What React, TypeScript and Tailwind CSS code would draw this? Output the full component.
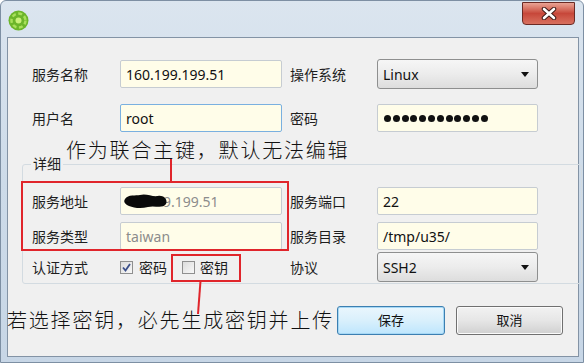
import React from 'react';

const FONT = "font-['Noto_Sans','Noto_Sans_CJK_SC',sans-serif]";

const Label = ({ text, w }: { text: string; w: string }) => (
  <span className={`${w} shrink-0 text-[14px] text-[#1e1e1e]`}>{text}</span>
);

const Field = ({ value, muted, focused, children }: { value?: string; muted?: boolean; focused?: boolean; children?: React.ReactNode }) => (
  <div
    className={`flex items-center h-[28px] px-[5px] rounded-[2px] border bg-[#fffde9] text-[14px] ${
      focused ? 'border-[#7ab0e0]' : 'border-[#c6ccd2]'
    } ${muted ? 'text-[#8c8c8c]' : 'text-[#111]'}`}
  >
    {children ?? value}
  </div>
);

const Select = ({ value }: { value: string }) => (
  <div className="flex items-center justify-between h-[30px] w-[161px] pl-[5px] pr-[8px] rounded-[3px] border border-[#8e8f8f] bg-gradient-to-b from-[#f6f6f6] via-[#ececec] to-[#dddddd] text-[14px] text-[#111]">
    <span>{value}</span>
    <svg width="8" height="5" viewBox="0 0 8 5">
      <path d="M0 0 H8 L4 5 Z" fill="#111" />
    </svg>
  </div>
);

const Check = ({ checked }: { checked?: boolean }) => (
  <span className="w-[13px] h-[13px] shrink-0 border border-[#8f8f8f] bg-gradient-to-br from-[#dcdcdc] to-[#f8f8f8] flex items-center justify-center">
    {checked && (
      <svg width="9" height="9" viewBox="0 0 9 9">
        <path d="M1 4.5 L3.5 7.5 L8 1" stroke="#3b4f8a" strokeWidth="1.8" fill="none" />
      </svg>
    )}
  </span>
);

function Row({ children, className = '' }: { children: React.ReactNode; className?: string }) {
  return <div className={`flex items-center h-[30px] ${className}`}>{children}</div>;
}

export default function App() {
  return (
    <div className={`relative w-[584px] h-[363px] overflow-hidden ${FONT} bg-gradient-to-b from-[#dbe5ef] via-[#cddbe9] to-[#c7d6e6] border border-[#7d8fa3] rounded-t-[6px]`}>
      {/* title bar */}
      <div className="flex items-start justify-between h-[36px]">
        <svg className="ml-[7px] mt-[9px]" width="21" height="21" viewBox="0 0 21 21">
          <circle cx="10.5" cy="10.5" r="10" fill="#6cb52a" />
          <circle cx="10.5" cy="10.5" r="7" fill="none" stroke="#a8e05a" strokeWidth="2.5" strokeDasharray="4 2.5" />
          <circle cx="10.5" cy="10.5" r="3" fill="#c9f07a" />
        </svg>
        <div className="mr-[8px] mt-[1px] w-[53px] h-[23px] rounded-b-[4px] border border-[#6b2a24] bg-gradient-to-b from-[#e9a394] via-[#c7473a] to-[#d8705f] flex items-center justify-center">
          <svg width="16" height="13" viewBox="0 0 16 13">
            <path d="M3 2 L13 11 M13 2 L3 11" stroke="#3d1a16" strokeWidth="4.5" strokeLinecap="round" />
            <path d="M3 2 L13 11 M13 2 L3 11" stroke="#ffffff" strokeWidth="2.6" strokeLinecap="round" />
          </svg>
        </div>
      </div>

      {/* client area */}
      <div className="ml-[6px] w-[572px] h-[320px] border border-[#8393a5] bg-[#f0f0f0] flex flex-col">
        <Row className="mt-[21px] pl-[24px]">
          <Label text="服务名称" w="w-[88px]" />
          <div className="w-[162px]"><Field value="160.199.199.51" /></div>
          <span className="w-[8px]" />
          <Label text="操作系统" w="w-[87px]" />
          <Select value="Linux" />
        </Row>
        <Row className="mt-[14px] pl-[24px]">
          <Label text="用户名" w="w-[88px]" />
          <div className="w-[162px]"><Field value="root" focused /></div>
          <span className="w-[8px]" />
          <Label text="密码" w="w-[87px]" />
          <div className="w-[161px]">
            <Field>
              <span className="flex gap-[1.8px] pl-[1px]">
                {Array.from({ length: 12 }).map((_, i) => (
                  <span key={i} className="w-[7px] h-[7px] rounded-full bg-[#111]" />
                ))}
              </span>
            </Field>
          </div>
        </Row>

        <div className="mt-[6px] pl-[58px] h-[24px] leading-[24px] text-[20px] font-light tracking-[1.8px] text-[#111]">
          作为联合主键，默认无法编辑
        </div>

        {/* 详细 group */}
        <div className="relative mt-[1px] ml-[14px] -mr-[4px] border border-[#d3dbe1] rounded-[3px] pl-[9px] pt-[21px] pb-[1px]">
          <span className="absolute left-[8px] -top-[10px] px-[2px] bg-[#f0f0f0] text-[14px] text-[#1e1e1e] leading-[18px]">详细</span>
          <Row>
            <Label text="服务地址" w="w-[88px]" />
            <div className="w-[162px]">
              <Field muted>
                <span className="relative w-[37px] h-[14px] shrink-0">
                  <svg className="absolute -left-[2px] -top-[2px]" width="44" height="18" viewBox="0 0 44 18">
                    <path d="M1 7 C4 2 12 4 16 3 C22 1 28 5 34 4 C40 3 44 8 42 12 C39 17 30 13 24 15 C17 17 10 16 5 14 C1 12 -1 10 1 7 Z" fill="#0a0a0a" />
                  </svg>
                </span>
                <span>9.199.51</span>
              </Field>
            </div>
            <span className="w-[8px]" />
            <Label text="服务端口" w="w-[87px]" />
            <div className="w-[161px]"><Field value="22" /></div>
          </Row>
          <Row className="mt-[5px]">
            <Label text="服务类型" w="w-[88px]" />
            <div className="w-[162px]"><Field value="taiwan" muted /></div>
            <span className="w-[8px]" />
            <Label text="服务目录" w="w-[87px]" />
            <div className="w-[161px]"><Field value="/tmp/u35/" /></div>
          </Row>
          <Row className="mt-[1px]">
            <Label text="认证方式" w="w-[88px]" />
            <div className="w-[162px] flex items-center text-[14px] text-[#1e1e1e]">
              <Check checked />
              <span className="ml-[6px]">密码</span>
              <span className="ml-[15px]"><Check /></span>
              <span className="ml-[5px]">密钥</span>
            </div>
            <span className="w-[8px]" />
            <Label text="协议" w="w-[87px]" />
            <Select value="SSH2" />
          </Row>
        </div>

        {/* bottom row */}
        <div className="mt-[22px] flex items-center -ml-[1px] pr-[15px]">
          <span className="flex-1 text-[20px] font-light tracking-[1.8px] leading-[24px] text-[#111] whitespace-nowrap">
            若选择密钥，必先生成密钥并上传
          </span>
          <button className="w-[108px] h-[29px] rounded-[3px] border border-[#3c7fb1] bg-gradient-to-b from-[#eaf6fd] via-[#d9f0fc] to-[#bee6fd] text-[13px] text-[#111] shadow-[inset_0_0_0_1px_#a6d8f5]">
            保存
          </button>
          <button className="ml-[11px] w-[107px] h-[29px] rounded-[3px] border border-[#707070] bg-gradient-to-b from-[#f2f2f2] via-[#e6e6e6] to-[#d0d0d0] text-[13px] text-[#111] shadow-[inset_0_0_0_1px_#fbfbfb]">
            取消
          </button>
        </div>
      </div>

      {/* red annotation marks */}
      <div className="absolute left-[20px] top-[180px] w-[268px] h-[70px] border-2 border-[#e0252b]" />
      <div className="absolute left-[169px] top-[158px] w-[2px] h-[23px] bg-[#e0252b]" />
      <div className="absolute left-[170px] top-[253px] w-[70px] h-[28px] border-2 border-[#e0252b]" />
      <svg className="absolute left-[194px] top-[280px]" width="8" height="34" viewBox="0 0 8 34">
        <path d="M5.5 0 L3 33" stroke="#e0252b" strokeWidth="2" />
      </svg>
    </div>
  );
}
